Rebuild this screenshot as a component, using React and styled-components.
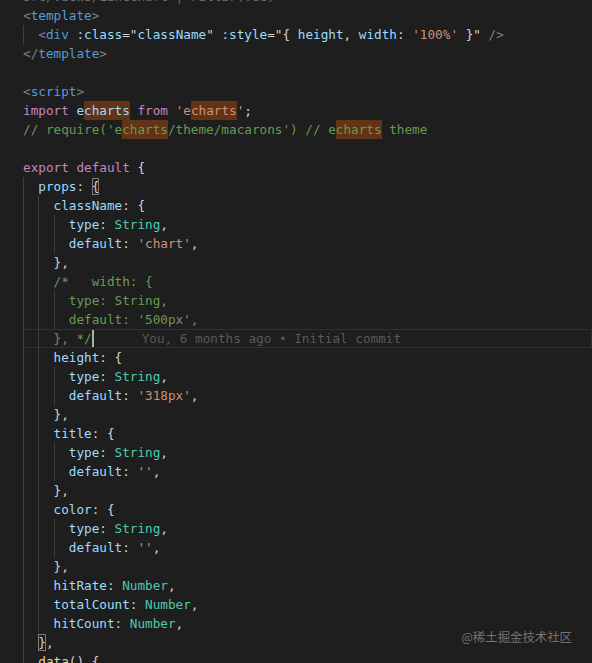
import React from "react";
import styled, { createGlobalStyle } from "styled-components";

const GlobalStyle = createGlobalStyle`
  html, body { margin: 0; padding: 0; background: #1e1e1e; overflow: hidden; }
`;

const C = {
  tag: "#808080",
  name: "#569cd6",
  attr: "#9cdcfe",
  str: "#ce9178",
  punc: "#d4d4d4",
  kw: "#c586c0",
  v: "#9cdcfe",
  com: "#6a9955",
  type: "#4ec9b0",
  fn: "#dcdcaa",
};

const Editor = styled.div`
  position: relative;
  width: 592px;
  height: 663px;
  overflow: hidden;
  background: #1e1e1e;
  font-family: "DejaVu Sans Mono", "Liberation Mono", monospace;
  font-size: 12.68px;
  padding-left: 23px;
  box-sizing: border-box;
`;

const Breadcrumb = styled.div`
  margin-top: -13px;
  height: 19px;
  line-height: 19px;
  color: #6f6f6f;
  white-space: pre;
`;

const Line = styled.div`
  display: flex;
  align-items: center;
  height: 19px;
  line-height: 19px;
  white-space: pre;
  box-shadow: ${(p) => (p.$current ? "inset 0 0 0 1px #303030" : "none")};
`;

const Guide = styled.span`
  flex-shrink: 0;
  width: 2ch;
  height: 19px;
  box-sizing: border-box;
  border-left: 1px solid #3f3f3f;
`;

const Tok = styled.span`
  color: ${(p) => p.$c};
  background: ${(p) => (p.$hl ? "#623315" : "transparent")};
`;

const Match = styled.span`
  display: inline-block;
  height: 17px;
  line-height: 17px;
  color: ${(p) => p.$c};
  outline: 1px solid #7c7c7c;
  outline-offset: -1px;
`;

const Cursor = styled.span`
  display: inline-block;
  width: 2px;
  height: 17px;
  background: #aeafad;
`;

const Blame = styled.span`
  margin-left: 48px;
  color: #595959;
`;

const Watermark = styled.div`
  position: absolute;
  right: 20px;
  bottom: 17px;
  font-family: "Noto Sans CJK SC", "Noto Sans", sans-serif;
  font-size: 12.4px;
  color: rgba(200, 200, 200, 0.5);
`;

const t = (text, c, hl) => ({ text, c, hl });

const lines = [
  { i: 0, k: [t("<", C.tag), t("template", C.name), t(">", C.tag)] },
  {
    i: 1,
    k: [
      t("<", C.tag), t("div", C.name), t(" ", C.punc), t(":class", C.attr), t("=", C.punc),
      t('"', C.punc), t("className", C.v), t('"', C.punc), t(" ", C.punc), t(":style", C.attr),
      t("=", C.punc), t('"', C.punc), t("{ ", C.punc), t("height", C.v), t(", ", C.punc),
      t("width", C.v), t(": ", C.punc), t("'100%'", C.str), t(" }", C.punc), t('"', C.punc),
      t(" ", C.punc), t("/>", C.tag),
    ],
  },
  { i: 0, k: [t("</", C.tag), t("template", C.name), t(">", C.tag)] },
  { i: 0, k: [] },
  { i: 0, k: [t("<", C.tag), t("script", C.name), t(">", C.tag)] },
  {
    i: 0,
    k: [
      t("import", C.kw), t(" ", C.punc), t("e", C.v), t("charts", C.v, true), t(" ", C.punc),
      t("from", C.kw), t(" ", C.punc), t("'e", C.str), t("charts", C.str, true), t("'", C.str), t(";", C.punc),
    ],
  },
  {
    i: 0,
    k: [
      t("// require('e", C.com), t("charts", C.com, true), t("/theme/macarons') // e", C.com),
      t("charts", C.com, true), t(" theme", C.com),
    ],
  },
  { i: 0, k: [] },
  { i: 0, k: [t("export", C.kw), t(" ", C.punc), t("default", C.kw), t(" {", C.punc)] },
  { i: 1, k: [t("props", C.v), t(": ", C.punc)], match: "{" },
  { i: 2, k: [t("className", C.v), t(": {", C.punc)] },
  { i: 3, k: [t("type", C.v), t(": ", C.punc), t("String", C.type), t(",", C.punc)] },
  { i: 3, k: [t("default", C.v), t(": ", C.punc), t("'chart'", C.str), t(",", C.punc)] },
  { i: 2, k: [t("},", C.punc)] },
  { i: 2, k: [t("/*   width: {", C.com)] },
  { i: 3, k: [t("type: String,", C.com)] },
  { i: 3, k: [t("default: '500px',", C.com)] },
  { i: 2, k: [t("}, */", C.com)], current: true },
  { i: 2, k: [t("height", C.v), t(": {", C.punc)] },
  { i: 3, k: [t("type", C.v), t(": ", C.punc), t("String", C.type), t(",", C.punc)] },
  { i: 3, k: [t("default", C.v), t(": ", C.punc), t("'318px'", C.str), t(",", C.punc)] },
  { i: 2, k: [t("},", C.punc)] },
  { i: 2, k: [t("title", C.v), t(": {", C.punc)] },
  { i: 3, k: [t("type", C.v), t(": ", C.punc), t("String", C.type), t(",", C.punc)] },
  { i: 3, k: [t("default", C.v), t(": ", C.punc), t("''", C.str), t(",", C.punc)] },
  { i: 2, k: [t("},", C.punc)] },
  { i: 2, k: [t("color", C.v), t(": {", C.punc)] },
  { i: 3, k: [t("type", C.v), t(": ", C.punc), t("String", C.type), t(",", C.punc)] },
  { i: 3, k: [t("default", C.v), t(": ", C.punc), t("''", C.str), t(",", C.punc)] },
  { i: 2, k: [t("},", C.punc)] },
  { i: 2, k: [t("hitRate", C.v), t(": ", C.punc), t("Number", C.type), t(",", C.punc)] },
  { i: 2, k: [t("totalCount", C.v), t(": ", C.punc), t("Number", C.type), t(",", C.punc)] },
  { i: 2, k: [t("hitCount", C.v), t(": ", C.punc), t("Number", C.type), t(",", C.punc)] },
  { i: 1, k: [], matchFirst: "}", after: [t(",", C.punc)] },
  { i: 1, k: [t("data", C.fn), t("() {", C.punc)] },
];

function CodeLine({ line }) {
  const guides = [];
  for (let g = 0; g < line.i; g++) guides.push(<Guide key={g} />);
  return (
    <Line $current={line.current}>
      {guides}
      {line.matchFirst && <Match $c={C.punc}>{line.matchFirst}</Match>}
      {line.k.map((tk, idx) => (
        <Tok key={idx} $c={tk.c} $hl={tk.hl}>
          {tk.text}
        </Tok>
      ))}
      {line.after &&
        line.after.map((tk, idx) => (
          <Tok key={"a" + idx} $c={tk.c}>
            {tk.text}
          </Tok>
        ))}
      {line.match && <Match $c={C.punc}>{line.match}</Match>}
      {line.current && (
        <>
          <Cursor />
          <Blame>You, 6 months ago • Initial commit</Blame>
        </>
      )}
    </Line>
  );
}

export default function App() {
  return (
    <>
      <GlobalStyle />
      <Editor>
        <Breadcrumb>src/views/LineChart | Pillar(vue)</Breadcrumb>
        {lines.map((l, i) => (
          <CodeLine key={i} line={l} />
        ))}
        <Watermark>@稀土掘金技术社区</Watermark>
      </Editor>
    </>
  );
}
